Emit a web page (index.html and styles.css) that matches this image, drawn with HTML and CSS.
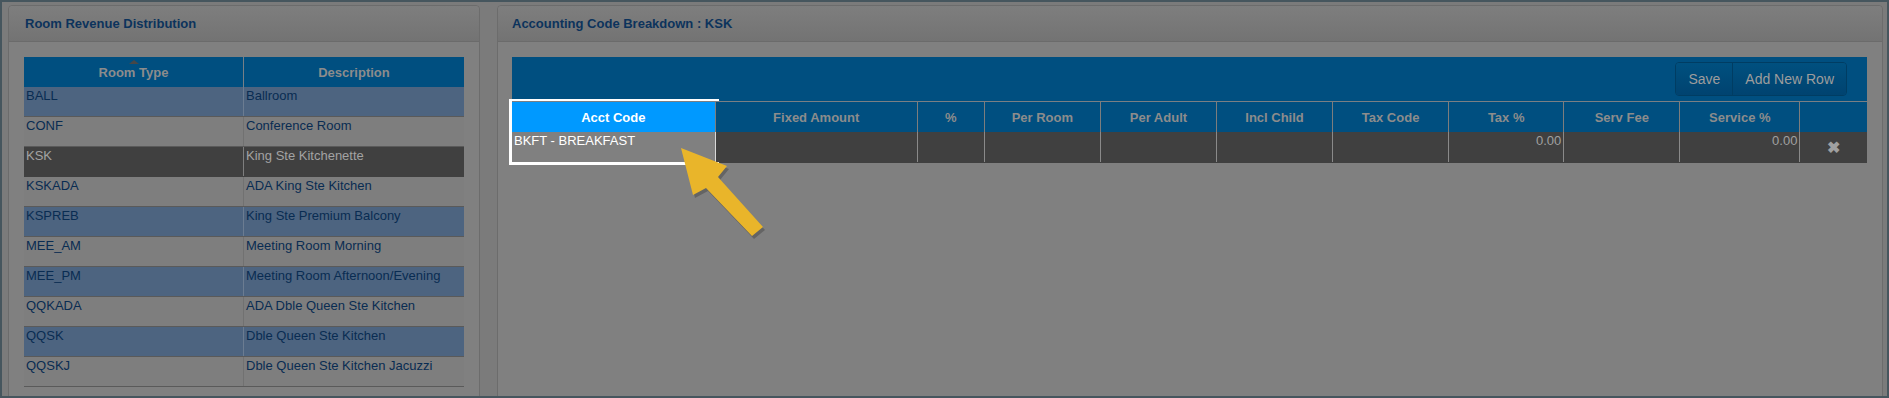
FILE: index.html
```html
<!DOCTYPE html>
<html lang="en">
<head>
    <meta charset="UTF-8">
    <title>Room Revenue Distribution</title>
    <link rel="stylesheet" href="styles.css">
</head>
<body>
    <div class="screen">
        <div class="panel panel-left">
            <div class="panel-head">Room Revenue Distribution</div>
            <div class="panel-body">
                <table class="grid rooms">
                    <thead>
                        <tr>
                            <th class="sorted">Room Type</th>
                            <th>Description</th>
                        </tr>
                    </thead>
                    <tbody>
                        <tr class="alt"><td>BALL</td><td>Ballroom</td></tr>
                        <tr><td>CONF</td><td>Conference Room</td></tr>
                        <tr class="selected"><td>KSK</td><td>King Ste Kitchenette</td></tr>
                        <tr><td>KSKADA</td><td>ADA King Ste Kitchen</td></tr>
                        <tr class="alt"><td>KSPREB</td><td>King Ste Premium Balcony</td></tr>
                        <tr><td>MEE_AM</td><td>Meeting Room Morning</td></tr>
                        <tr class="alt"><td>MEE_PM</td><td>Meeting Room Afternoon/Evening</td></tr>
                        <tr><td>QQKADA</td><td>ADA Dble Queen Ste Kitchen</td></tr>
                        <tr class="alt"><td>QQSK</td><td>Dble Queen Ste Kitchen</td></tr>
                        <tr><td>QQSKJ</td><td>Dble Queen Ste Kitchen Jacuzzi</td></tr>
                    </tbody>
                </table>
            </div>
        </div>

        <div class="panel panel-right">
            <div class="panel-head">Accounting Code Breakdown : KSK</div>
            <div class="panel-body">
                <div class="toolbar">
                    <div class="btn-group">
                        <button class="btn">Save</button>
                        <button class="btn">Add New Row</button>
                    </div>
                </div>
                <table class="grid codes">
                    <colgroup>
                        <col class="w-code"><col class="w-amt"><col class="w-pct">
                        <col class="w-std"><col class="w-std"><col class="w-std"><col class="w-std">
                        <col class="w-tax"><col class="w-std"><col class="w-svc"><col class="w-pct">
                    </colgroup>
                    <thead>
                        <tr>
                            <th class="spot">Acct Code</th>
                            <th>Fixed Amount</th>
                            <th>%</th>
                            <th>Per Room</th>
                            <th>Per Adult</th>
                            <th>Incl Child</th>
                            <th>Tax Code</th>
                            <th>Tax %</th>
                            <th>Serv Fee</th>
                            <th>Service %</th>
                            <th></th>
                        </tr>
                    </thead>
                    <tbody>
                        <tr class="selected">
                            <td class="spot">BKFT - BREAKFAST</td>
                            <td></td>
                            <td></td>
                            <td></td>
                            <td></td>
                            <td></td>
                            <td></td>
                            <td class="num">0.00</td>
                            <td></td>
                            <td class="num">0.00</td>
                            <td class="del">&#x2716;</td>
                        </tr>
                    </tbody>
                </table>

                <!-- tour highlight around the Acct Code column -->
                <div class="spot-frame"></div>
                <svg class="pointer" width="110" height="110" viewBox="0 0 110 110">
                    <polygon class="pointer-shadow" points="13,10 59,28 50,39 95,89 84,98 38,50 25,57"/>
                    <polygon class="pointer-fill" points="11,7 57,25 48,36 93,86 82,95 36,47 23,54"/>
                </svg>
            </div>
        </div>
    </div>
</body>
</html>
```

FILE: styles.css
```css
body {
    margin: 0;
    background: #46565e;
    font-family: 'Liberation Sans', Arial, sans-serif;
    font-size: 13px;
}
.screen {
    margin: 2px;
    height: 394px;
    background: #7b7b7b;
    display: flex;
    gap: 17px;
    padding: 3px 4px 0 6px;
    box-sizing: border-box;
    overflow: hidden;
}
.panel {
    background: #808080;
    border: 1px solid #6c6c6c;
    border-radius: 4px;
    height: 420px;
    box-sizing: border-box;
}
.panel-left {
    width: 472px;
    flex: none;
}
.panel-right {
    flex: 1;
}
.panel-head {
    height: 35px;
    line-height: 35px;
    padding: 0 15px 0 16px;
    border-bottom: 1px solid #6b6b6b;
    border-radius: 4px 4px 0 0;
    background: linear-gradient(#7e7e7e, #737373);
    color: #0c335c;
    font-weight: bold;
    font-size: 13px;
}
.panel-right .panel-head {
    padding-left: 14px;
}
.panel-body {
    position: relative;
    padding: 15px 15px 0 15px;
}
.panel-right .panel-body {
    padding: 15px 15px 0 14px;
}

/* tables */
.grid {
    width: 100%;
    border-collapse: collapse;
    table-layout: fixed;
}
.grid th {
    background: #004f80;
    color: #8c8c8c;
    font-weight: bold;
    height: 30px;
    padding: 0;
    text-align: center;
    vertical-align: middle;
    border-left: 1px solid #777f86;
}
.grid th:first-child {
    border-left: none;
}
.grid td {
    height: 28px;
    padding: 1px 2px 0 2px;
    line-height: 16px;
    vertical-align: top;
    color: #092c52;
    background: #7e7e7e;
    border-bottom: 1px solid #5a5a5a;
    border-left: 1px solid #717171;
    white-space: nowrap;
    overflow: hidden;
}
.grid td:first-child {
    border-left: none;
}
.grid tr.alt td {
    background: #4d6480;
    border-left-color: #6b7c91;
}
.grid tr.selected td {
    background: #404040;
    color: #a3a3a3;
    border-bottom-color: #404040;
    border-left-color: #7e7e7e;
}
.rooms th.sorted {
    position: relative;
    width: 219px;
}
.rooms th.sorted::before {
    content: "";
    position: absolute;
    top: 3px;
    left: 50%;
    margin-left: -5px;
    border: 5px solid transparent;
    border-top: none;
    border-bottom: 4px solid #474747;
}

/* accounting codes */
.toolbar {
    background: #004f80;
    height: 44px;
    display: flex;
    justify-content: flex-end;
    align-items: flex-start;
    padding: 5px 20px 0 0;
    box-sizing: border-box;
}
.btn-group {
    display: flex;
    border: 1px solid #003d63;
    border-radius: 4px;
    overflow: hidden;
}
.btn {
    height: 32px;
    background: linear-gradient(#00507f, #004370);
    color: #9d9d9d;
    border: none;
    font-family: 'Liberation Sans', Arial, sans-serif;
    font-size: 14px;
    padding: 0 12px;
}
.btn + .btn {
    border-left: 1px solid #003d63;
}
.codes thead tr {
    border-top: 1px solid #7a7f84;
}
.codes th {
    border-left-color: #7d7d7d;
}
.w-code { width: 203px; }
.w-amt { width: 202px; }
.w-pct { width: 67px; }
.w-std { width: 116px; }
.w-tax { width: 115px; }
.w-svc { width: 120px; }
.codes tr.selected td {
    color: #a0a0a0;
    border-left-color: #8a8a8a;
}
.codes td.num {
    text-align: right;
}
.codes td.del {
    text-align: center;
    vertical-align: middle;
    font-size: 16px;
    font-weight: bold;
    padding: 2px 0 0 0;
    color: #9c9c9c;
}
.codes th.spot {
    background: #0099ff;
    color: #ffffff;
}
.codes tr.selected td.spot {
    background: #808080;
    color: #ffffff;
    border-right: 1px solid #d8d8d8;
    border-bottom-color: #808080;
}

.spot-frame {
    position: absolute;
    left: 11px;
    top: 57px;
    width: 207px;
    height: 61px;
    border-left: 3px solid #ffffff;
    border-top: 2px solid #ffffff;
    border-bottom: 3px solid #ffffff;
    pointer-events: none;
}
.pointer {
    position: absolute;
    left: 172px;
    top: 99px;
}
.pointer-shadow {
    fill: rgba(0, 0, 0, 0.22);
}
.pointer-fill {
    fill: #e9b52a;
}
```
